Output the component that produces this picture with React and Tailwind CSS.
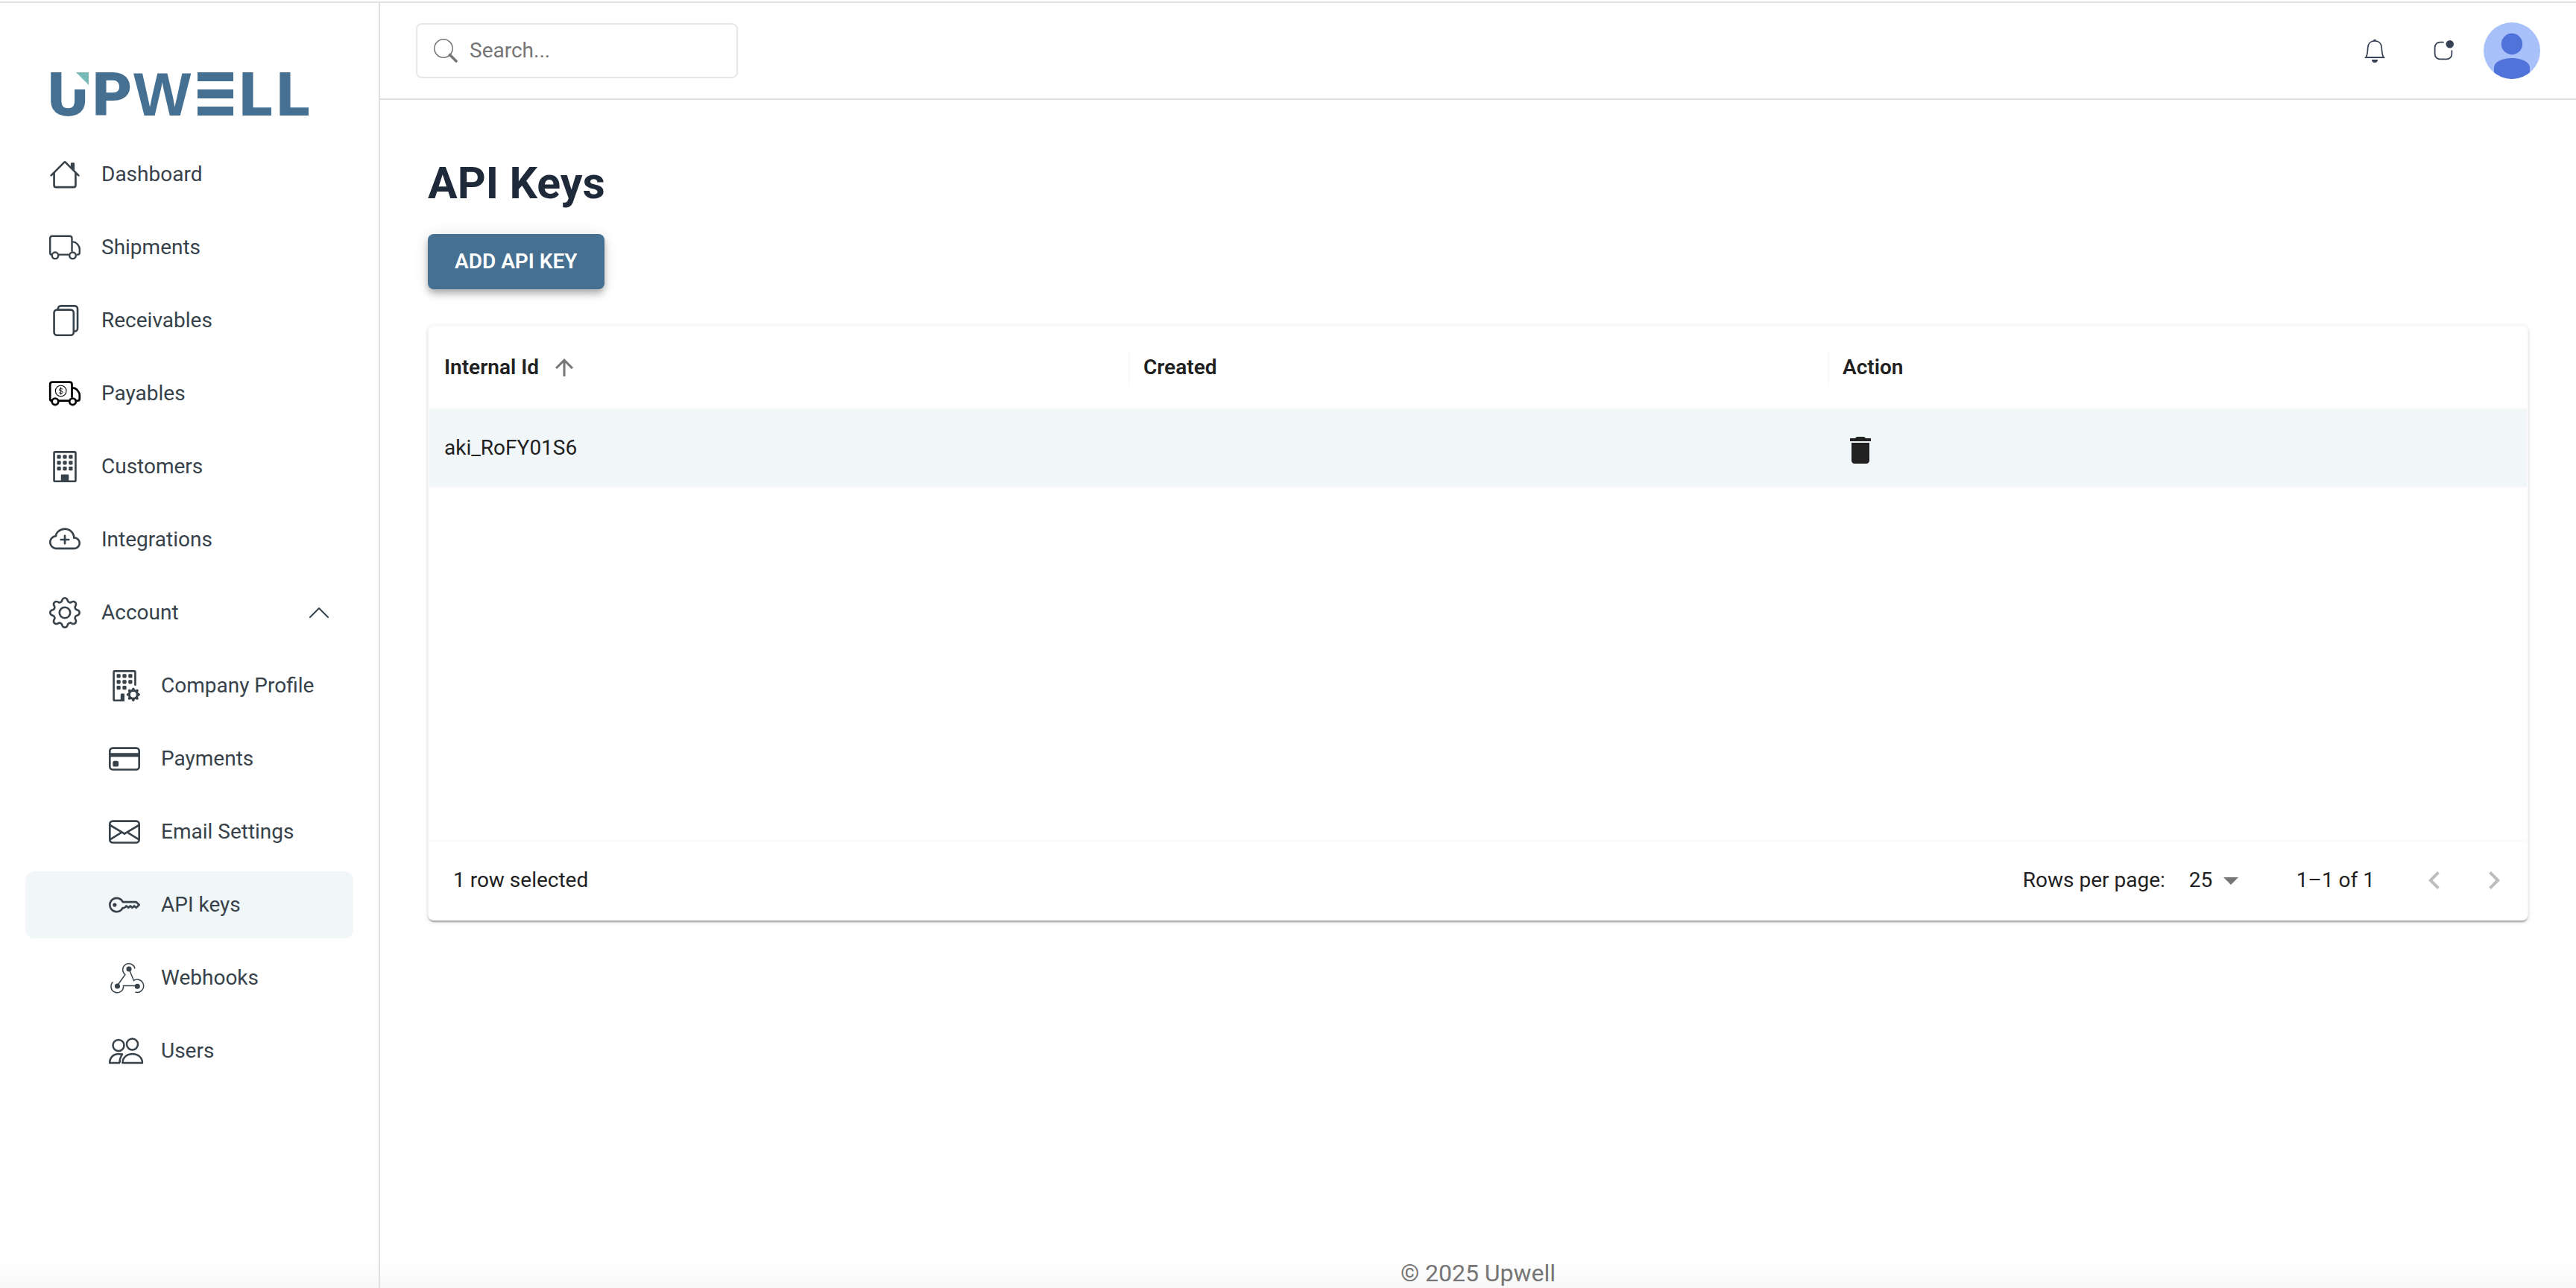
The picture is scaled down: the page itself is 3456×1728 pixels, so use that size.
import React from 'react';
import {
  BsFiles,
  BsBuilding,
  BsCloudPlus,
  BsGear,
  BsBuildingGear,
  BsCreditCard,
  BsEnvelope,
  BsKey,
  BsChevronUp,
  BsAppIndicator,
} from 'react-icons/bs';
import { MdArrowUpward, MdArrowDropDown, MdDelete, MdKeyboardArrowLeft, MdKeyboardArrowRight } from 'react-icons/md';

const HouseIcon = ({ className }) => (
  <svg viewBox="0 0 16 16" fill="currentColor" className={className} aria-hidden="true">
    <path d="M2 13.5V7h1v6.5a.5.5 0 0 0 .5.5h9a.5.5 0 0 0 .5-.5V7h1v6.5a1.5 1.5 0 0 1-1.5 1.5h-9A1.5 1.5 0 0 1 2 13.5zm11-11V6l-2-2V2.5a.5.5 0 0 1 .5-.5h1a.5.5 0 0 1 .5.5z" />
    <path d="M7.293 1.5a1 1 0 0 1 1.414 0l6.647 6.646a.5.5 0 0 1-.708.708L8 2.207 1.354 8.854a.5.5 0 1 1-.708-.708L7.293 1.5z" />
  </svg>
);

const TruckShape = () => (
  <>
    <path d="M3.5 30.8A2.600 2.600 0 0 1 1.200 28V8.600A3 3 0 0 1 4.200 5.700H27.500A3 3 0 0 1 30.500 8.600V26.500" />
    <path d="M30.500 13.600H33C36 13.600 40.800 19 40.800 23V28A2.600 2.600 0 0 1 38.200 30.600H36.500M13 30.600H26.500" />
    <circle cx="8" cy="31.800" r="4.300" />
    <circle cx="31.500" cy="31.800" r="4.300" />
  </>
);

const TruckIcon = ({ className }) => (
  <svg viewBox="0 0 42 42" fill="none" stroke="currentColor" strokeWidth="2.400" className={className} aria-hidden="true">
    <TruckShape />
  </svg>
);

const MoneyTruckIcon = ({ className }) => (
  <svg viewBox="0 0 42 42" fill="none" stroke="#000" strokeWidth="2.700" className={className} aria-hidden="true">
    <TruckShape />
    <circle cx="15.700" cy="17.500" r="7.300" strokeWidth="1.100" />
    <path d="M18 15.500C17.600 14.500 16.800 14.100 15.700 14.100C14.200 14.100 13.400 14.800 13.400 15.800C13.400 18.200 18.200 16.700 18.200 19.300C18.200 20.400 17.200 21 15.800 21C14.400 21 13.500 20.400 13.200 19.400M15.700 12.600V22.400" strokeWidth="1" />
  </svg>
);

const WebhookIcon = ({ className }) => (
  <svg viewBox="0 0 42 42" fill="none" stroke="currentColor" strokeWidth="1.500" className={className} aria-hidden="true">
    <path d="M35 8.500A8.200 8.200 0 1 0 22 16.500L11.500 31" />
    <path d="M27 9L33.500 24.500A8.600 8.600 0 1 1 35.500 40" />
    <path d="M38 31.500H19.500A8.300 8.300 0 1 1 5.500 26.500" />
    <circle cx="27" cy="9" r="2.800" fill="currentColor" />
    <circle cx="11.500" cy="32" r="2.800" fill="currentColor" />
    <circle cx="38.300" cy="32.300" r="2.800" fill="currentColor" />
  </svg>
);

const UsersIcon = ({ className }) => (
  <svg viewBox="0 0 42 42" fill="none" stroke="currentColor" strokeWidth="2.500" strokeLinejoin="round" className={className} aria-hidden="true">
    <circle cx="13" cy="13.500" r="7.500" />
    <circle cx="31.500" cy="12" r="7.500" />
    <path d="M15 37H1.200C1.200 30 6 25 13 25C15 25 16.500 25 18 25.500C15.500 29 14.500 32 14.500 37" />
    <path d="M18.500 37C18.500 30 24 25 31.700 25C39.400 25 45 30 45 37Z" />
  </svg>
);

const SearchIcon = ({ className }) => (
  <svg viewBox="0 0 32 32" fill="none" stroke="currentColor" className={className} aria-hidden="true">
    <circle cx="13" cy="13" r="12.200" strokeWidth="1.500" />
    <path d="M21.500 21.500L30 30" strokeWidth="3.600" strokeLinecap="round" />
  </svg>
);

const BellIcon = ({ className }) => (
  <svg viewBox="0 0 32 32" fill="none" stroke="currentColor" className={className} aria-hidden="true">
    <path d="M16 2.800C10.500 2.800 6.900 6.500 6.700 12C6.500 18 5.800 22 4.300 25H27.700C26.200 22 25.500 18 25.300 12C25.100 6.500 21.500 2.800 16 2.800Z" strokeWidth="1.700" />
    <path d="M2.600 25.200H29.400" strokeWidth="1.700" />
    <path d="M13.700 2.400A2.400 2.400 0 0 1 18.300 2.400ZM12 28H20A4 4 0 0 1 12 28Z" fill="currentColor" stroke="none" />
  </svg>
);

const Logo = () => (
  <svg viewBox="0 0 348 60" className="block w-[348px] overflow-visible" role="img" aria-label="Upwell">
    <g fill="#467092" fontFamily="Roboto, sans-serif" fontWeight="900" fontSize="82">
      <text y="59">
        <tspan x="-2 58">UP</tspan>
        <tspan x="113" fontFamily="Liberation Sans, sans-serif">W</tspan>
        <tspan x="255 305">LL</tspan>
      </text>
      <rect x="199" y="1" width="48" height="12" />
      <rect x="199" y="24" width="48" height="12" />
      <rect x="199" y="47" width="48" height="12" />
    </g>
    <rect x="31" y="0" width="24" height="24" fill="#fff" />
    <path d="M36 1H53V18Z" fill="#76b9b7" />
  </svg>
);

const AvatarIcon = () => (
  <svg viewBox="0 0 76 76" className="block size-19 rounded-full bg-[#a8c1fa]" aria-hidden="true">
    <circle cx="38" cy="29" r="14.200" fill="#5073d9" />
    <path d="M14 76V61C14 53 25 48 38 48S62 53 62 61V76Z" fill="#5073d9" />
  </svg>
);

const mainItems = [
  { label: 'Dashboard', icon: HouseIcon },
  { label: 'Shipments', icon: TruckIcon },
  { label: 'Receivables', icon: BsFiles },
  { label: 'Payables', icon: MoneyTruckIcon },
  { label: 'Customers', icon: BsBuilding },
  { label: 'Integrations', icon: BsCloudPlus },
];

const accountItems = [
  { label: 'Company Profile', icon: BsBuildingGear },
  { label: 'Payments', icon: BsCreditCard },
  { label: 'Email Settings', icon: BsEnvelope },
  { label: 'API keys', icon: BsKey, active: true },
  { label: 'Webhooks', icon: WebhookIcon },
  { label: 'Users', icon: UsersIcon },
];

const NavItem = ({ item, nested }) => {
  const Icon = item.icon;
  return (
    <a
      href="#"
      aria-current={item.active ? 'page' : undefined}
      className={`flex h-[90px] items-center gap-7 rounded-xl ${nested ? 'pl-28' : 'pl-8'} ${
        item.active ? 'bg-[#f1f6f9]' : ''
      }`}
    >
      <Icon className="size-[42px] shrink-0 overflow-visible" />
      {item.label}
    </a>
  );
};

const Sidebar = () => (
  <aside className="w-[510px] shrink-0 border-r-2 border-[#e0e0e0] px-[34px] pt-23">
    <div className="pb-[33px] pl-8">
      <Logo />
    </div>
    <nav className="flex flex-col gap-2 text-[#37424a]">
      {mainItems.map((item) => (
        <NavItem key={item.label} item={item} />
      ))}
      <button type="button" aria-expanded="true" className="flex h-[90px] items-center gap-7 pr-[30px] pl-8 text-left">
        <BsGear className="size-[42px] shrink-0" />
        <span className="flex-1">Account</span>
        <BsChevronUp className="size-8" />
      </button>
      {accountItems.map((item) => (
        <NavItem key={item.label} item={item} nested />
      ))}
    </nav>
  </aside>
);

const TopBar = () => (
  <header className="flex h-[130px] items-center border-b-2 border-[#e0e0e0] pr-12 pl-12">
    <label className="flex h-[74px] w-[432px] items-center gap-4 rounded-lg border-2 border-gray-200 px-[22px] text-[#757575]">
      <SearchIcon className="size-8 shrink-0" />
      <input
        type="search"
        aria-label="Search"
        placeholder="Search..."
        className="w-full min-w-0 outline-none placeholder:text-[#757575]"
      />
    </label>
    <div className="ml-auto flex items-center text-gray-700">
      <button type="button" aria-label="Notifications" className="mr-15.5">
        <BellIcon className="size-8" />
      </button>
      <button type="button" aria-label="Updates" className="mr-10">
        <BsAppIndicator className="size-7" />
      </button>
      <button type="button" aria-label="Profile">
        <AvatarIcon />
      </button>
    </div>
  </header>
);

const KeysTable = () => (
  <section className="mt-12 rounded-lg border-2 border-[#fafafa] bg-white shadow-[0_4px_2px_-2px_rgba(0,0,0,0.2),0_2px_2px_0_rgba(0,0,0,0.14),0_2px_6px_0_rgba(0,0,0,0.12)]">
    <div className="min-h-[689px]">
      <table className="w-full table-fixed border-collapse text-left">
        <thead>
          <tr className="h-[110px] border-b-2 border-[#fafafa]">
            <th className="pl-5 font-semibold" aria-sort="ascending">
              <span className="flex items-center gap-4">
                Internal Id
                <MdArrowUpward className="size-9 text-[#757575]" />
              </span>
            </th>
            <th className="font-semibold">
              <div className="flex h-12 items-center border-l-2 border-[#fafafa] pl-4.5">Created</div>
            </th>
            <th className="font-semibold">
              <div className="flex h-12 items-center border-l-2 border-[#fafafa] pl-4.5">Action</div>
            </th>
          </tr>
        </thead>
        <tbody>
          <tr className="h-[106px] border-b-2 border-[#fafafa] bg-[#f1f6f9]">
            <td className="pl-5">aki_RoFY01S6</td>
            <td className="pl-5"></td>
            <td className="pt-1.5 pl-5">
              <button type="button" aria-label="Delete key" className="block">
                <MdDelete className="size-12" />
              </button>
            </td>
          </tr>
        </tbody>
      </table>
    </div>
    <div className="flex h-[106px] items-center border-t-2 border-[#fafafa] pr-5 pl-8">
      <span>1 row selected</span>
      <label htmlFor="page-size" className="ml-auto">
        Rows per page:
      </label>
      <div className="relative ml-8 flex items-center">
        <select id="page-size" defaultValue="25" className="w-[80px] appearance-none outline-none">
          <option>25</option>
          <option>50</option>
          <option>100</option>
        </select>
        <MdArrowDropDown className="pointer-events-none absolute right-0 size-12 text-[#757575]" />
      </div>
      <span className="ml-16">1–1 of 1</span>
      <div className="ml-14 flex gap-8 text-[#bdbdbd]">
        <button type="button" aria-label="Previous page" disabled>
          <MdKeyboardArrowLeft className="size-12" />
        </button>
        <button type="button" aria-label="Next page" disabled>
          <MdKeyboardArrowRight className="size-12" />
        </button>
      </div>
    </div>
  </section>
);

export default function App() {
  return (
    <div className="flex min-h-screen flex-col bg-[linear-gradient(to_top,#f8f8f8,#fff_40px)] pt-0.5 font-[Roboto,sans-serif] text-[28px] leading-10 text-[#212121]">
      <div className="flex flex-1 border-t-2 border-[#e0e0e0]">
        <Sidebar />
        <div className="flex min-w-0 flex-1 flex-col">
          <TopBar />
          <main className="flex-1 pt-19 pr-16 pl-16">
            <h1 className="text-[59px] leading-[72px] font-bold text-gray-800">API Keys</h1>
            <button
              type="button"
              className="mt-8 h-[74px] rounded-lg bg-[#467092] px-9 font-semibold text-white shadow-[0_4px_8px_-2px_rgba(0,0,0,0.2),0_8px_10px_0_rgba(0,0,0,0.14),0_2px_20px_0_rgba(0,0,0,0.12)]"
            >
              ADD API KEY
            </button>
            <KeysTable />
          </main>
          <footer className="text-center text-[32px] text-[#757575]">© 2025 Upwell</footer>
        </div>
      </div>
    </div>
  );
}
